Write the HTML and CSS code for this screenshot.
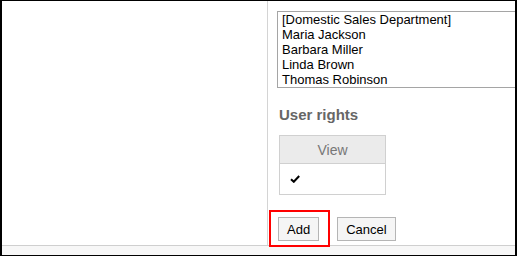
FILE: index.html
```html
<!DOCTYPE html>
<html lang="en">
<head>
    <meta charset="UTF-8">
    <meta name="viewport" content="width=device-width, initial-scale=1.0">
    <title>User rights</title>
    <link rel="stylesheet" href="styles.css">
</head>
<body>

<div class="frame">
    <div class="main">
        <div class="side"></div>
        <div class="content">
            <div class="member-list">
                <div class="member">[Domestic Sales Department]</div>
                <div class="member">Maria Jackson</div>
                <div class="member">Barbara Miller</div>
                <div class="member">Linda Brown</div>
                <div class="member">Thomas Robinson</div>
            </div>

            <h2>User rights</h2>

            <table class="rights">
                <tr><th>View</th></tr>
                <tr>
                    <td>
                        <svg class="check" width="10" height="8" viewBox="0 0 10 8">
                            <path d="M1 4.2 L3.8 6.8 L9.2 1" fill="none" stroke="#000" stroke-width="2"/>
                        </svg>
                    </td>
                </tr>
            </table>

            <div class="actions">
                <span class="highlight">
                    <button>Add</button>
                </span>
                <button>Cancel</button>
            </div>
        </div>
    </div>
    <div class="footer"></div>
</div>

</body>
</html>
```

FILE: styles.css
```css
body {
    margin: 0;
    font-family: 'Liberation Sans', Arial, sans-serif;
    background: #fff;
}
.frame {
    width: 513px;
    height: 254px;
    border-left: 2px solid #000;
    border-right: 2px solid #000;
    border-top: 1px solid #000;
    border-bottom: 1px solid #000;
    display: flex;
    flex-direction: column;
    overflow: hidden;
}
.main {
    height: 244px;
    display: flex;
    border-bottom: 1px solid #cfcfcf;
}
.side {
    width: 265px;
    border-right: 1px solid #d4d4d4;
}
.content {
    flex: 1;
    padding: 10px 0 0 9px;
}
.footer {
    flex: 1;
    background-color: #f7f7f7;
}
.member-list {
    border: 1px solid #a5a5a5;
    border-right: none;
    padding: 0 4px;
    font-size: 13px;
    line-height: 15px;
    color: #000;
    white-space: nowrap;
}
h2 {
    margin: 18px 0 0 2px;
    font-size: 15px;
    line-height: 18px;
    color: #666;
}
.rights {
    margin: 11px 0 0 2px;
    width: 107px;
    border-collapse: collapse;
}
.rights th, .rights td {
    border: 1px solid #d0d0d0;
    padding: 0;
}
.rights th {
    height: 27px;
    background-color: #ebebeb;
    font-weight: normal;
    font-size: 14px;
    color: #777;
}
.rights td {
    height: 30px;
    padding-left: 10px;
}
.check {
    display: block;
}
.actions {
    margin: 22px 0 0 1px;
    display: flex;
    gap: 18px;
}
.actions button {
    height: 24px;
    padding: 1px 8px 0;
    font-family: 'Liberation Sans', Arial, sans-serif;
    font-size: 13px;
    color: #000;
    background-color: #f5f5f5;
    border: 1px solid #b5b5b5;
    border-radius: 0;
}
.highlight {
    position: relative;
    display: flex;
}
.highlight::after {
    content: "";
    position: absolute;
    left: -9px;
    top: -7px;
    width: 57px;
    height: 33px;
    border: 2px solid #f00;
}
```
